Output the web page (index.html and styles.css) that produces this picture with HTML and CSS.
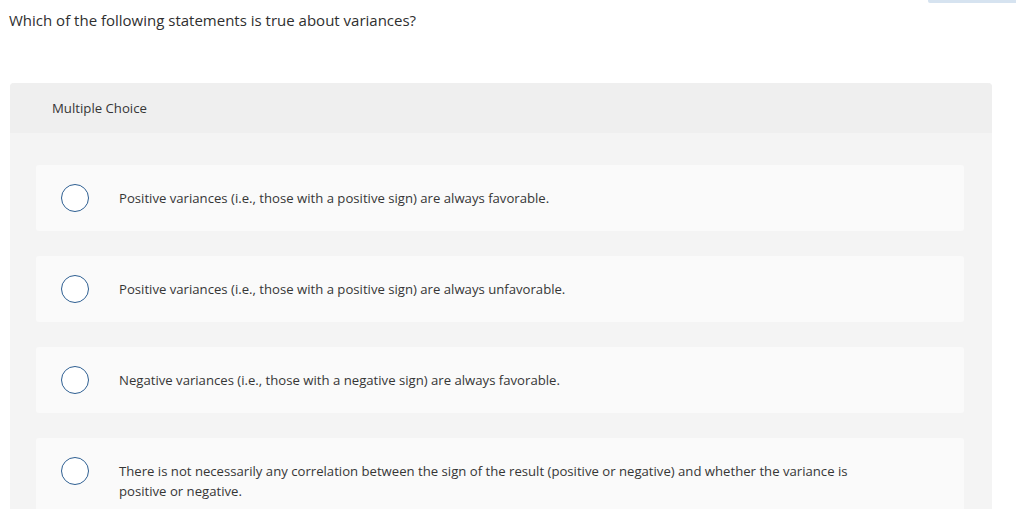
FILE: index.html
```html
<!DOCTYPE html>
<html lang="en">
<head>
<meta charset="utf-8">
<title>Multiple Choice</title>
<link rel="stylesheet" href="styles.css">
</head>
<body>
<div class="topbar"><span class="topbar-tab"></span></div>
<p class="question">Which of the following statements is true about variances?</p>
<section class="panel">
  <header class="panel-header">Multiple Choice</header>
  <div class="panel-body">
    <label class="option"><span class="radio"></span><span class="option-text">Positive variances (i.e., those with a positive sign) are always favorable.</span></label>
    <label class="option"><span class="radio"></span><span class="option-text">Positive variances (i.e., those with a positive sign) are always unfavorable.</span></label>
    <label class="option"><span class="radio"></span><span class="option-text">Negative variances (i.e., those with a negative sign) are always favorable.</span></label>
    <label class="option"><span class="radio"></span><span class="option-text">There is not necessarily any correlation between the sign of the result (positive or negative) and whether the variance is positive or negative.</span></label>
  </div>
</section>
</body>
</html>
```
FILE: styles.css
```css
html, body {
  margin: 0;
  padding: 0;
  background: #ffffff;
  overflow: hidden;
}
body {
  font-family: "Open Sans", Lato, Arial, sans-serif;
  color: #333333;
  height: 509px;
}
.topbar {
  display: flex;
  justify-content: flex-end;
  height: 3px;
}
.topbar-tab {
  width: 88px;
  height: 3px;
  background: #d6e3f0;
  border-bottom-left-radius: 2px;
}
.question {
  margin: 0;
  padding: 7px 0 0 9px;
  font-size: 15px;
  line-height: 20px;
  color: #2f2f2f;
}
.panel {
  margin: 53px 0 0 10px;
  width: 982px;
  border-radius: 4px 4px 0 0;
  background: #f4f4f4;
  overflow: hidden;
}
.panel-header {
  height: 50px;
  display: flex;
  align-items: center;
  padding-left: 42px;
  background: #efefef;
  font-size: 13.2px;
  color: #363636;
}
.panel-body {
  display: flex;
  flex-direction: column;
  gap: 25px;
  padding: 32px 28px 40px 26px;
}
.option {
  display: flex;
  align-items: flex-start;
  gap: 30px;
  padding: 23px 76px 23px 25px;
  background: #fafafa;
  border-radius: 3px;
  font-size: 13.15px;
  line-height: 20px;
  color: #363636;
}
.radio {
  flex: none;
  width: 28px;
  height: 28px;
  margin: -4px 0;
  box-sizing: border-box;
  border: 1.75px solid #2e5f92;
  border-radius: 50%;
  background: #fff;
}
.option-text {
  flex: 1;
}
```
